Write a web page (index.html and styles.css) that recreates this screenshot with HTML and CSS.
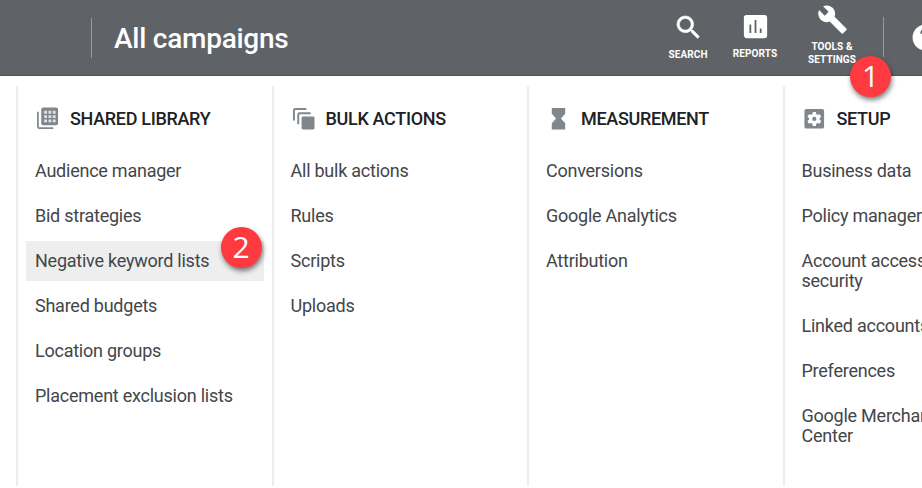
FILE: index.html
```html
<!DOCTYPE html>
<html lang="en">
<head>
    <meta charset="UTF-8">
    <meta name="viewport" content="width=device-width, initial-scale=1.0">
    <title>All campaigns</title>
    <link rel="stylesheet" href="styles.css">
</head>
<body>
    <header class="topbar">
        <h1 class="title">All campaigns</h1>
        <nav class="tools">
            <a class="tool search">
                <svg viewBox="0 0 24 24"><path stroke="#fff" stroke-width=".4" d="M15.5 14h-.79l-.28-.27A6.47 6.47 0 0 0 16 9.5 6.5 6.5 0 1 0 9.5 16c1.61 0 3.09-.59 4.23-1.57l.27.28v.79l5 4.99L20.49 19l-4.99-5zm-6 0a4.5 4.5 0 1 1 0-9 4.5 4.5 0 0 1 0 9z"/></svg>
                <span>SEARCH</span>
            </a>
            <a class="tool reports">
                <svg viewBox="0 0 24 24"><path d="M19 3H5a2 2 0 0 0-2 2v14c0 1.1.9 2 2 2h14a2 2 0 0 0 2-2V5a2 2 0 0 0-2-2zM8.7 17H7.3v-6.5h1.4V17zm4 0h-1.4V7h1.4v10zm4 0h-1.4v-3.5h1.4V17z"/></svg>
                <span>REPORTS</span>
            </a>
            <a class="tool settings">
                <svg viewBox="0 0 24 24"><path d="M22.7 19l-9.1-9.1c.9-2.3.4-5-1.500-6.900-2-2-5-2.400-7.400-1.300L9 6 6 9 1.600 4.700C.4 7.100.9 10.100 2.900 12.100c1.900 1.900 4.600 2.400 6.900 1.500l9.100 9.100c.4.4 1 .4 1.400 0l2.300-2.300c.5-.4.5-1.100.1-1.400z"/></svg>
                <span>TOOLS &amp;<br>SETTINGS</span>
                <b class="badge badge-one">1</b>
            </a>
            <a class="help">
                <svg viewBox="0 0 24 24"><path d="M12 2a10 10 0 1 0 0 20 10 10 0 0 0 0-20zm1 17h-2v-2h2v2zm2.07-7.750l-.9.920C13.450 12.900 13 13.500 13 15h-2v-.5c0-1.100.45-2.100 1.170-2.830l1.240-1.260A2 2 0 1 0 10 9H8a4 4 0 1 1 7.070 2.250z"/></svg>
            </a>
        </nav>
    </header>

    <main class="menu">
        <section class="column">
            <h2>
                <svg viewBox="0 0 24 24"><path d="M2 5v15.5A1.5 1.5 0 0 0 3.5 22H18" fill="none" stroke="#80868b" stroke-width="1.8"/><rect x="5.5" y="0.5" width="17.5" height="18.5" rx="2"/><path d="M8.5 4h3v3h-3zm4.500 0h3v3h-3zm4.500 0h3v3h-3zM8.500 8.500h3v3h-3zm4.500 0h3v3h-3zm4.500 0h3v3h-3zM8.500 13h3v3h-3zm4.500 0h3v3h-3zm4.500 0h3v3h-3z" fill="#dfe1e3"/></svg>
                SHARED LIBRARY
            </h2>
            <ul>
                <li>Audience manager</li>
                <li>Bid strategies</li>
                <li class="active">Negative keyword lists<b class="badge badge-two">2</b></li>
                <li>Shared budgets</li>
                <li>Location groups</li>
                <li>Placement exclusion lists</li>
            </ul>
        </section>
        <section class="column">
            <h2>
                <svg viewBox="0 0 24 24"><path d="M2 14V3.5A1.5 1.5 0 0 1 3.5 2H15M6.5 18V8A1.5 1.5 0 0 1 8 6.5h11.5" fill="none" stroke="#80868b" stroke-width="2"/><rect x="10" y="10" width="13.5" height="13.5" rx="1.5"/></svg>
                BULK ACTIONS
            </h2>
            <ul>
                <li>All bulk actions</li>
                <li>Rules</li>
                <li>Scripts</li>
                <li>Uploads</li>
            </ul>
        </section>
        <section class="column">
            <h2>
                <svg viewBox="0 0 24 24"><path d="M5 1h14v6l-4.500 5 4.500 5v6.500H5V17l4.500-5L5 7z"/></svg>
                MEASUREMENT
            </h2>
            <ul>
                <li>Conversions</li>
                <li>Google Analytics</li>
                <li>Attribution</li>
            </ul>
        </section>
        <section class="column">
            <h2>
                <svg viewBox="0 0 24 24"><rect x="1.5" y="2" width="20.5" height="20.5" rx="2"/><path d="M10.200 5.200h3.200l.5 2.300 1.300.7 2.200-.7 1.600 2.800-1.700 1.500v1.400l1.700 1.500-1.600 2.800-2.200-.7-1.300.7-.5 2.300h-3.200l-.5-2.300-1.300-.7-2.200.7-1.600-2.800 1.700-1.500v-1.400l-1.700-1.500 1.600-2.800 2.200.7 1.300-.7z" fill="#fff"/><circle cx="11.800" cy="12.400" r="2.200"/></svg>
                SETUP
            </h2>
            <ul>
                <li>Business data</li>
                <li>Policy manager</li>
                <li>Account access &amp;<br>security</li>
                <li>Linked accounts</li>
                <li>Preferences</li>
                <li>Google Merchant<br>Center</li>
            </ul>
        </section>
    </main>
</body>
</html>
```
FILE: styles.css
```css
* {
    margin: 0;
    padding: 0;
    box-sizing: border-box;
}

body {
    font-family: Roboto, sans-serif;
    background: #fff;
    height: 488px;
    overflow: hidden;
}

.topbar {
    display: flex;
    justify-content: space-between;
    height: 76px;
    padding-left: 91px;
    background: #5f6368;
    border-bottom: 1px solid #505357;
    color: #fff;
}

.title {
    height: 40px;
    margin-top: 18px;
    padding-left: 22px;
    border-left: 1px solid #96999c;
    font-size: 28px;
    font-weight: 500;
    letter-spacing: -0.25px;
    line-height: 42px;
    white-space: nowrap;
}

.tools {
    display: flex;
    flex-shrink: 0;
}

.tool {
    position: relative;
    display: flex;
    flex-direction: column;
    align-items: center;
    font-size: 10px;
    font-weight: 700;
    letter-spacing: 0.1px;
    line-height: 13px;
    text-align: center;
}

.tool svg,
.help svg {
    width: 31px;
    height: 31px;
    fill: #fff;
}

.search {
    width: 66px;
    padding-top: 12px;
}

.search span {
    margin-top: 5px;
}

.reports {
    width: 68px;
    padding-top: 11px;
}

.reports span {
    margin-top: 5px;
}

.settings {
    width: 86px;
    padding-top: 4px;
}

.settings span {
    margin-top: 5px;
}

.help {
    width: 39px;
    height: 40px;
    margin: 17px 0 0 8px;
    padding: 5px 0 0 26px;
    border-left: 1px solid #96999c;
}

.menu {
    display: grid;
    grid-template-columns: repeat(4, 255.5px);
    height: 400px;
    margin: 10px 0 0 16px;
}

.column {
    padding: 19px 8px 0;
    border-left: 2px solid #ececec;
}

.column h2 {
    display: flex;
    align-items: center;
    gap: 11px;
    height: 26px;
    padding-left: 10px;
    font-size: 18px;
    font-weight: 500;
    letter-spacing: -0.32px;
    color: #202124;
    white-space: nowrap;
}

.column h2 svg {
    width: 23px;
    height: 23px;
    fill: #80868b;
}

.column ul {
    display: flex;
    flex-direction: column;
    gap: 5px;
    margin-top: 20px;
    list-style: none;
}

.column li {
    position: relative;
    padding: 10px 9px;
    font-size: 18px;
    letter-spacing: -0.24px;
    line-height: 20px;
    color: #434649;
    white-space: nowrap;
}

.column .active {
    background: #eee;
}

.badge {
    position: absolute;
    width: 41px;
    height: 41px;
    border-radius: 50%;
    background: #fd3a40;
    box-shadow: 1px 3px 5px rgba(0, 0, 0, 0.5);
    color: #fff;
    font-family: "Open Sans", sans-serif;
    font-size: 30px;
    font-weight: 500;
    letter-spacing: 0;
    line-height: 40px;
    text-align: center;
}

.badge-one {
    top: 56px;
    right: -16px;
}

.badge-two {
    top: -14px;
    right: 2px;
}
```
